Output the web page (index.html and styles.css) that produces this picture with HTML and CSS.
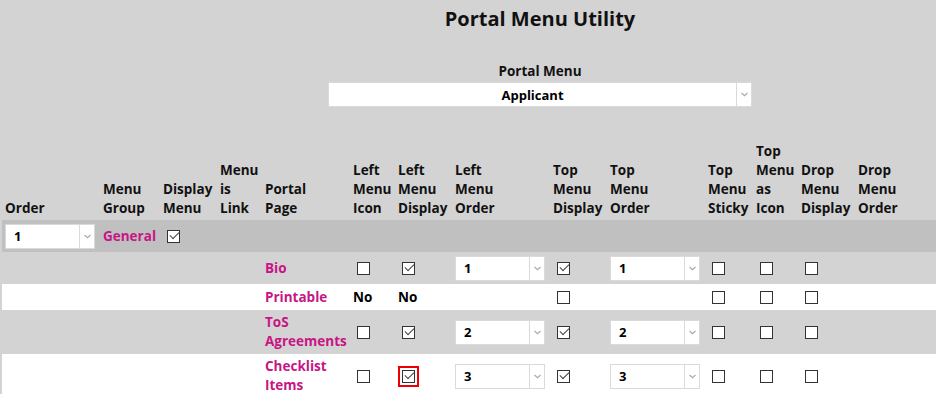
FILE: index.html
```html
<!DOCTYPE html>
<html lang="en">
<head>
<meta charset="utf-8">
<title>Portal Menu Utility</title>
<link rel="stylesheet" href="styles.css">
</head>
<body>
<div class="page">
  <div class="top">
    <h1 class="title">Portal Menu Utility</h1>
    <div class="pm-label">Portal Menu</div>
    <div class="sel sel-wide">
      <span class="sel-val sel-center">Applicant</span>
      <span class="sel-arrow"><svg width="7" height="5" viewBox="0 0 7 5"><polyline points="0.5,1 3.5,3.8 6.5,1" fill="none" stroke="#aaa" stroke-width="1.2"/></svg></span>
    </div>
  </div>

  <table class="grid">
    <colgroup>
      <col class="w98"><col class="w60"><col class="w57"><col class="w45"><col class="w88"><col class="w45"><col class="w57"><col class="w98"><col class="w57"><col class="w98"><col class="w48"><col class="w45"><col class="w57"><col>
    </colgroup>
    <thead>
      <tr>
        <th><span class="hd">Order</span></th>
        <th><span class="hd">Menu Group</span></th>
        <th><span class="hd">Display Menu</span></th>
        <th><span class="hd">Menu is Link</span></th>
        <th><span class="hd">Portal Page</span></th>
        <th><span class="hd">Left Menu Icon</span></th>
        <th><span class="hd">Left Menu Display</span></th>
        <th><span class="hd">Left Menu Order</span></th>
        <th><span class="hd">Top Menu Display</span></th>
        <th><span class="hd">Top Menu Order</span></th>
        <th><span class="hd">Top Menu Sticky</span></th>
        <th><span class="hd">Top Menu as Icon</span></th>
        <th><span class="hd">Drop Menu Display</span></th>
        <th><span class="hd">Drop Menu Order</span></th>
      </tr>
    </thead>
    <tbody>
      <tr class="row-group">
        <td>
          <div class="sel sel-order">
            <span class="sel-val">1</span>
            <span class="sel-arrow"><svg width="7" height="5" viewBox="0 0 7 5"><polyline points="0.5,1 3.5,3.8 6.5,1" fill="none" stroke="#aaa" stroke-width="1.2"/></svg></span>
          </div>
        </td>
        <td class="link">General</td>
        <td><input type="checkbox" class="cb" checked></td>
        <td></td><td></td><td></td><td></td><td></td><td></td><td></td><td></td><td></td><td></td><td></td>
      </tr>
      <tr class="row-gray row-32">
        <td></td><td></td><td></td><td></td>
        <td class="link">Bio</td>
        <td><input type="checkbox" class="cb"></td>
        <td><input type="checkbox" class="cb" checked></td>
        <td>
          <div class="sel sel-order">
            <span class="sel-val">1</span>
            <span class="sel-arrow"><svg width="7" height="5" viewBox="0 0 7 5"><polyline points="0.5,1 3.5,3.8 6.5,1" fill="none" stroke="#aaa" stroke-width="1.2"/></svg></span>
          </div>
        </td>
        <td><input type="checkbox" class="cb" checked></td>
        <td>
          <div class="sel sel-order">
            <span class="sel-val">1</span>
            <span class="sel-arrow"><svg width="7" height="5" viewBox="0 0 7 5"><polyline points="0.5,1 3.5,3.8 6.5,1" fill="none" stroke="#aaa" stroke-width="1.2"/></svg></span>
          </div>
        </td>
        <td><input type="checkbox" class="cb"></td>
        <td><input type="checkbox" class="cb"></td>
        <td><input type="checkbox" class="cb"></td>
        <td></td>
      </tr>
      <tr class="row-white row-26">
        <td></td><td></td><td></td><td></td>
        <td class="link">Printable</td>
        <td class="no">No</td>
        <td class="no">No</td>
        <td></td>
        <td><input type="checkbox" class="cb"></td>
        <td></td>
        <td><input type="checkbox" class="cb"></td>
        <td><input type="checkbox" class="cb"></td>
        <td><input type="checkbox" class="cb"></td>
        <td></td>
      </tr>
      <tr class="row-gray">
        <td></td><td></td><td></td><td></td>
        <td class="link">ToS Agreements</td>
        <td><input type="checkbox" class="cb"></td>
        <td><input type="checkbox" class="cb" checked></td>
        <td>
          <div class="sel sel-order">
            <span class="sel-val">2</span>
            <span class="sel-arrow"><svg width="7" height="5" viewBox="0 0 7 5"><polyline points="0.5,1 3.5,3.8 6.5,1" fill="none" stroke="#aaa" stroke-width="1.2"/></svg></span>
          </div>
        </td>
        <td><input type="checkbox" class="cb" checked></td>
        <td>
          <div class="sel sel-order">
            <span class="sel-val">2</span>
            <span class="sel-arrow"><svg width="7" height="5" viewBox="0 0 7 5"><polyline points="0.5,1 3.5,3.8 6.5,1" fill="none" stroke="#aaa" stroke-width="1.2"/></svg></span>
          </div>
        </td>
        <td><input type="checkbox" class="cb"></td>
        <td><input type="checkbox" class="cb"></td>
        <td><input type="checkbox" class="cb"></td>
        <td></td>
      </tr>
      <tr class="row-white">
        <td></td><td></td><td></td><td></td>
        <td class="link">Checklist Items</td>
        <td><input type="checkbox" class="cb"></td>
        <td><input type="checkbox" class="cb cb-focus" checked></td>
        <td>
          <div class="sel sel-order">
            <span class="sel-val">3</span>
            <span class="sel-arrow"><svg width="7" height="5" viewBox="0 0 7 5"><polyline points="0.5,1 3.5,3.8 6.5,1" fill="none" stroke="#aaa" stroke-width="1.2"/></svg></span>
          </div>
        </td>
        <td><input type="checkbox" class="cb" checked></td>
        <td>
          <div class="sel sel-order">
            <span class="sel-val">3</span>
            <span class="sel-arrow"><svg width="7" height="5" viewBox="0 0 7 5"><polyline points="0.5,1 3.5,3.8 6.5,1" fill="none" stroke="#aaa" stroke-width="1.2"/></svg></span>
          </div>
        </td>
        <td><input type="checkbox" class="cb"></td>
        <td><input type="checkbox" class="cb"></td>
        <td><input type="checkbox" class="cb"></td>
        <td></td>
      </tr>
    </tbody>
  </table>
</div>
</body>
</html>
```

FILE: styles.css
```css
html, body {
  margin: 0;
  padding: 0;
  background: #d3d3d3;
  overflow: hidden;
}
body {
  font-family: "Open Sans", "Liberation Sans", sans-serif;
  color: #111;
}
.page {
  width: 936px;
}
.top {
  width: 1080px;
  display: flex;
  flex-direction: column;
  align-items: center;
  padding-top: 7px;
}
.title {
  margin: 0;
  font-size: 20px;
  font-weight: 700;
  line-height: 24px;
}
.pm-label {
  margin-top: 32px;
  font-size: 13.5px;
  font-weight: 700;
  line-height: 17px;
}
.sel {
  display: flex;
  box-sizing: border-box;
  height: 25px;
  border: 1px solid #dadada;
  background: #fff;
}
.sel-wide {
  margin-top: 2px;
  width: 424px;
}
.sel-order {
  width: 90px;
}
.sel-val {
  flex: 1;
  display: flex;
  align-items: center;
  padding-left: 8px;
  font-size: 13px;
  font-weight: 700;
  color: #000;
}
.sel-center {
  justify-content: center;
  padding-left: 0;
}
.sel-arrow {
  box-sizing: border-box;
  width: 15px;
  border-left: 1px solid #dadada;
  display: flex;
  align-items: center;
  justify-content: center;
}
.grid {
  margin: 35px 0 0 2px;
  width: 934px;
  table-layout: fixed;
  border-collapse: collapse;
  border-spacing: 0;
}
.w98 { width: 98px; }
.w60 { width: 60px; }
.w57 { width: 57px; }
.w45 { width: 45px; }
.w48 { width: 48px; }
.w88 { width: 88px; }
.grid th {
  text-align: left;
  vertical-align: bottom;
  font-size: 13.5px;
  font-weight: 700;
  line-height: 19px;
  padding: 0 3px 2px 3px;
  white-space: nowrap;
}
.hd {
  display: inline-block;
  width: min-content;
  white-space: normal;
}
.grid td {
  font-size: 13.5px;
  font-weight: 700;
  line-height: 19px;
  padding: 3px 3px;
  vertical-align: middle;
}
.row-group td {
  background: #c0c0c0;
  height: 26px;
}
.row-gray td {
  background: #d3d3d3;
}
.row-white td {
  background: #fff;
}
.row-32 td {
  height: 26px;
}
.row-26 td {
  height: 20px;
}
.link {
  color: #c71585;
}
.no {
  color: #000;
}
.cb {
  -webkit-appearance: none;
  appearance: none;
  box-sizing: border-box;
  width: 13px;
  height: 13px;
  margin: 3px 3px 3px 4px;
  border: 1px solid #333;
  background: #fff;
  position: relative;
  vertical-align: middle;
  display: inline-block;
}
.cb:checked::after {
  content: "";
  position: absolute;
  left: 1.5px;
  top: 1px;
  width: 7.5px;
  height: 4px;
  border-left: 1.5px solid #444;
  border-bottom: 1.5px solid #444;
  transform: rotate(-45deg);
}
.cb-focus {
  outline: 2px solid #ee0000;
  outline-offset: 2.5px;
}
```
